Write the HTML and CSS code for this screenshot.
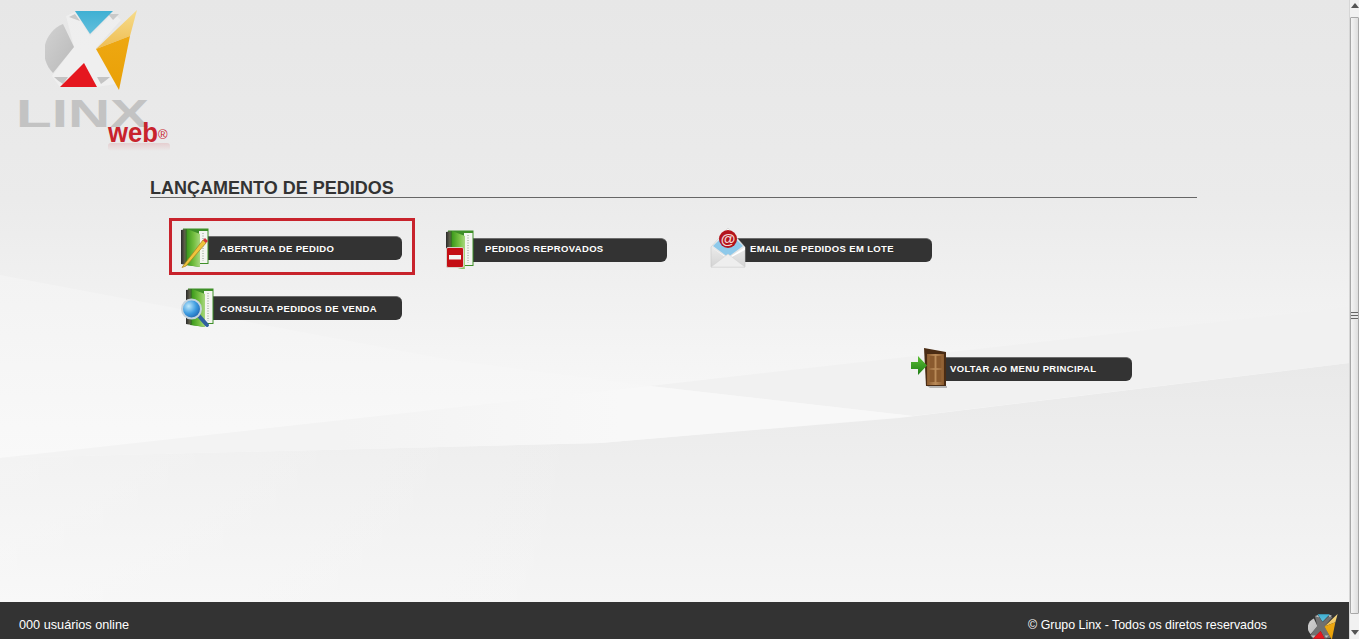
FILE: index.html
```html
<!DOCTYPE html>
<html lang="pt-BR">
<head>
<meta charset="utf-8">
<title>Lançamento de Pedidos</title>
<link rel="stylesheet" href="styles.css">
</head>
<body>
<svg class="defs" width="0" height="0" aria-hidden="true">
  <defs>
    <linearGradient id="gGray" x1="0" y1="0" x2="1" y2="1"><stop offset="0" stop-color="#d2d2d2"/><stop offset="1" stop-color="#b9b9b9"/></linearGradient>
    <linearGradient id="gBlue" x1="0" y1="0" x2="0" y2="1"><stop offset="0" stop-color="#3fb0d3"/><stop offset="1" stop-color="#62bfdc"/></linearGradient>
    <linearGradient id="gGoldT" x1="0" y1="0" x2="0" y2="1"><stop offset="0" stop-color="#f6dc8c"/><stop offset="1" stop-color="#efbd52"/></linearGradient>
    <linearGradient id="gGold" x1="0" y1="0" x2="0" y2="1"><stop offset="0" stop-color="#eea812"/><stop offset="1" stop-color="#e9a006"/></linearGradient>
    <linearGradient id="gCover" x1="0" y1="0" x2="1" y2="0"><stop offset="0" stop-color="#3c9a1c"/><stop offset=".55" stop-color="#76c042"/><stop offset="1" stop-color="#a7d77f"/></linearGradient>
    <linearGradient id="gSpine" x1="0" y1="0" x2="1" y2="0"><stop offset="0" stop-color="#2a2a2a"/><stop offset=".6" stop-color="#5d5d4a"/><stop offset="1" stop-color="#2f7a1c"/></linearGradient>
    <radialGradient id="gLens" cx=".35" cy=".35" r=".8"><stop offset="0" stop-color="#bfe9fb"/><stop offset=".5" stop-color="#3d9be0"/><stop offset="1" stop-color="#144f9e"/></radialGradient>
    <linearGradient id="gEnv" x1="0" y1="0" x2="0" y2="1"><stop offset="0" stop-color="#ffffff"/><stop offset="1" stop-color="#d4d4d4"/></linearGradient>
    <linearGradient id="gDoor" x1="0" y1="0" x2="1" y2="0"><stop offset="0" stop-color="#8a5a2e"/><stop offset=".5" stop-color="#b98a58"/><stop offset="1" stop-color="#8a5a2e"/></linearGradient>
    <linearGradient id="gArrow" x1="0" y1="0" x2="0" y2="1"><stop offset="0" stop-color="#5cc034"/><stop offset="1" stop-color="#1f7d16"/></linearGradient>
    <linearGradient id="gFade" x1="0" y1="0" x2="0" y2="1"><stop offset="0" stop-color="#c8232c" stop-opacity=".14"/><stop offset="1" stop-color="#c8232c" stop-opacity="0"/></linearGradient>
    <linearGradient id="bgTop" gradientUnits="userSpaceOnUse" x1="0" y1="275" x2="0" y2="458"><stop offset="0" stop-color="#f3f3f3"/><stop offset="1" stop-color="#f9f9f9"/></linearGradient>
    <linearGradient id="bgWedge" gradientUnits="userSpaceOnUse" x1="0" y1="0" x2="620" y2="0"><stop offset="0" stop-color="#f3f3f3"/><stop offset=".55" stop-color="#f3f3f3"/><stop offset="1" stop-color="#f8f8f8"/></linearGradient>
    <linearGradient id="bgLow" gradientUnits="userSpaceOnUse" x1="0" y1="363" x2="0" y2="602"><stop offset="0" stop-color="#e9e9e9"/><stop offset=".4" stop-color="#eeeeee"/><stop offset="1" stop-color="#f5f5f5"/></linearGradient>
    <linearGradient id="bgLeft" gradientUnits="userSpaceOnUse" x1="0" y1="0" x2="620" y2="0"><stop offset="0" stop-color="#ffffff" stop-opacity=".3"/><stop offset="1" stop-color="#ffffff" stop-opacity="0"/></linearGradient>
    <symbol id="mark" viewBox="45 10 93 81">
      <path d="M66 16 L75 12 L90 36 L113 13 L121 20 L96 48 L116 84 L97 87 L84 63 L60 87 L52 76 L74 47Z" fill="#ffffff" fill-opacity=".3"/>
      <path d="M63 24 L74 47 L53 73 A30 30 0 0 1 63 24Z" fill="url(#gGray)"/>
      <path d="M69 17 L75 14 L80 21Z M108 14 L119 14 L113 20Z" fill="#c9c9c9"/>
      <path d="M54 77 L68 77 L63 84 Q58 81 54 77Z M97 77 L110 77 Q104 82 101 84Z" fill="#c4c4c4"/>
      <path d="M75 11 L113 11 L90 34Z" fill="url(#gBlue)"/>
      <path d="M84 63 L97 87 L60 87Z" fill="#e5171f"/>
      <path d="M137 10 L96 49 L130 36Z" fill="url(#gGoldT)"/>
      <path d="M96 49 L130 36 L119 90Z" fill="url(#gGold)"/>
    </symbol>
    <symbol id="folder" viewBox="0 0 30 40">
      <path d="M3 0.5 H28.5 V36 H20 V39 L5 37Z" fill="#3e8f28"/>
      <rect x="19" y="3" width="8.5" height="32" fill="#f3f5f0"/>
      <path d="M23 5 V33" stroke="#8a9a8a" stroke-width="1" stroke-dasharray="1 1.5"/>
      <path d="M1 2 L7 1 V37 L1 36Z" fill="url(#gSpine)"/>
      <path d="M7 1 L20 6 V39 L7 37Z" fill="url(#gCover)"/>
    </symbol>
  </defs>
</svg>

<div class="page">
  <div class="content">
    <svg class="backdrop" viewBox="0 0 1349 639" preserveAspectRatio="none" aria-hidden="true">
      <path d="M0 275 L450 360 L650 386 L0 458Z" fill="url(#bgTop)"/>
      <path d="M0 458 L600 443 L899 418 L1349 363 V639 H0Z" fill="url(#bgLow)"/>
      <path d="M0 458 L600 443 L620 639 H0Z" fill="url(#bgLeft)"/>
      <path d="M650 386 L1349 307 V363 L913 416Z" fill="#f1f1f1"/>
      <path d="M0 458 L650 386 L913 416 L600 443Z" fill="url(#bgWedge)"/>
    </svg>

    <header class="brand">
      <svg class="logo" viewBox="0 0 180 160" role="img" aria-label="Linx web">
        <use href="#mark" x="45" y="10" width="93" height="81"/>
        <text class="logo-linx" x="16" y="127" textLength="133" lengthAdjust="spacingAndGlyphs">LINX</text>
        <text class="logo-web" x="108" y="142" textLength="50" lengthAdjust="spacingAndGlyphs">web</text>
        <text class="logo-reg" x="158" y="139">®</text>
        <rect class="logo-glow" x="108" y="143" width="62" height="8" rx="3"/>
      </svg>
    </header>

    <main class="panel">
      <h1 class="title">LANÇAMENTO DE PEDIDOS</h1>
      <nav class="menu">
        <a class="btn is-selected" href="#">
          <svg class="icon" viewBox="0 0 40 40" aria-hidden="true">
            <use href="#folder" x="0" y="0" width="30" height="40"/>
            <path d="M3 38 L2 39.5 L6 38 L26 15 L23 12Z" fill="#f0c43c" stroke="#a8801c" stroke-width=".7"/>
            <path d="M23 12 L26 15 L28 13 L25 10Z" fill="#d8343a"/>
          </svg>
          <span class="bar">ABERTURA DE PEDIDO</span>
        </a>
        <a class="btn is-lower" href="#">
          <svg class="icon" viewBox="0 0 40 40" aria-hidden="true">
            <use href="#folder" x="0" y="0" width="30" height="40"/>
            <rect x="1.5" y="17.5" width="17" height="20" rx="1.5" fill="#c40e14" stroke="#d8cfc8"/>
            <rect x="4" y="25" width="12" height="4.5" fill="#f4f4f4"/>
          </svg>
          <span class="bar">PEDIDOS REPROVADOS</span>
        </a>
        <a class="btn is-lower" href="#">
          <svg class="icon" viewBox="0 0 40 40" aria-hidden="true">
            <path d="M1 17 L18 -2 L35 17 V37 H1Z" fill="url(#gEnv)" stroke="#c8c8c8" stroke-width=".6"/>
            <path d="M3 16 L18 1 L33 16 L18 27Z" fill="#8ec9ea"/>
            <circle cx="18" cy="9" r="9" fill="#b3141c"/>
            <text class="icon-at" x="18" y="14" text-anchor="middle">@</text>
            <path d="M1 17 L18 28 L35 17 V20 L18 29Z" fill="#ffffff"/>
            <path d="M1 37 L18 24 L35 37Z" fill="#eeeeee" stroke="#d0d0d0" stroke-width=".5"/>
          </svg>
          <span class="bar">EMAIL DE PEDIDOS EM LOTE</span>
        </a>
        <a class="btn" href="#">
          <svg class="icon" viewBox="0 0 40 40" aria-hidden="true">
            <use href="#folder" x="5" y="0" width="30" height="40"/>
            <path d="M19 28 L27 37" stroke="#2f5f9e" stroke-width="4" stroke-linecap="round"/>
            <circle cx="11.5" cy="21" r="9.5" fill="url(#gLens)" stroke="#c4d2dd" stroke-width="2"/>
          </svg>
          <span class="bar">CONSULTA PEDIDOS DE VENDA</span>
        </a>
      </nav>
      <a class="btn is-back" href="#">
        <svg class="icon" viewBox="0 0 40 40" aria-hidden="true">
          <path d="M17 37 L37 37 L37 39 L20 39Z" fill="#b5b5b5"/>
          <path d="M14 -1 L36 3 L36 37 L16 37Z" fill="#4a2c14"/>
          <rect x="17" y="5" width="17" height="31" fill="url(#gDoor)"/>
          <rect x="19.5" y="7" width="5" height="12" fill="#8a5a2e"/>
          <rect x="26.5" y="7" width="5" height="12" fill="#8a5a2e"/>
          <rect x="19.5" y="21" width="5" height="12" fill="#8a5a2e"/>
          <rect x="26.5" y="21" width="5" height="12" fill="#8a5a2e"/>
          <path d="M1 13 H8 V7 L17 16.5 L8 26 V20 H1Z" fill="url(#gArrow)"/>
        </svg>
        <span class="bar is-tight">VOLTAR AO MENU PRINCIPAL</span>
      </a>
    </main>

    <footer class="footer">
      <span class="online">000 usuários online</span>
      <span class="copy">© Grupo Linx - Todos os diretos reservados</span>
      <svg class="footer-mark" viewBox="0 0 30 26" aria-hidden="true"><use href="#mark" width="30" height="26"/></svg>
    </footer>
  </div>

  <div class="scrollbar" aria-hidden="true">
    <span class="arrow arrow-up"></span>
    <span class="thumb"><span class="grip"></span></span>
    <span class="arrow arrow-down"></span>
  </div>
</div>
</body>
</html>
```
FILE: styles.css
```css
* { box-sizing: border-box; }
html, body { margin: 0; height: 100%; overflow: hidden; }
body { font-family: "Liberation Sans", Arial, sans-serif; color: #333; }
.defs { position: absolute; }

.page { display: flex; height: 639px; }
.content {
  position: relative;
  flex: 1;
  min-width: 0;
  display: flex;
  flex-direction: column;
  background: linear-gradient(180deg, #e7e7e7 0, #ebebeb 200px, #f1f1f1 300px, #f7f7f7 400px);
}
.backdrop { position: absolute; inset: 0; width: 100%; height: 100%; }

.brand { position: relative; height: 178px; }
.logo { display: block; width: 180px; height: 160px; }
.logo-linx { font: 700 38px "Liberation Sans", sans-serif; fill: #c3c3c3; }
.logo-web { font: 700 28px "Liberation Sans", sans-serif; fill: #c8232c; }
.logo-reg { font: 400 13px "Liberation Sans", sans-serif; fill: #c8232c; }
.logo-glow { fill: url(#gFade); }

.panel { position: relative; margin-left: 150px; width: 1047px; }
.title {
  margin: 0;
  height: 20px;
  font-size: 18px;
  line-height: 21px;
  font-weight: 700;
  color: #333;
  border-bottom: 1px solid #666;
}

.menu {
  display: grid;
  grid-template-columns: repeat(3, 265px);
  grid-auto-rows: 60px;
  margin: 30px 0 0 30px;
}

.btn {
  position: relative;
  display: block;
  width: 222px;
  height: 40px;
  padding: 8px 0 0 25px;
  text-decoration: none;
}
.bar {
  display: block;
  height: 24px;
  padding-left: 15px;
  font-size: 9.5px;
  letter-spacing: .35px;
  font-weight: 700;
  line-height: 23px;
  color: #fff;
  white-space: nowrap;
  background: #333;
  border-top: 1px solid #6d6d6d;
  border-radius: 0 6px 6px 0;
}
.icon { position: absolute; left: 0; top: 0; width: 40px; height: 40px; overflow: visible; z-index: 1; }
.icon-at { font: 700 15px "Liberation Sans", sans-serif; fill: #f2d5d5; }

.is-lower { margin-top: 2px; }
.is-lower .bar { line-height: 19px; }
.is-tight { line-height: 21px; }
.is-back { margin: 1px 0 0 760px; }
.is-selected::before {
  content: "";
  position: absolute;
  inset: -10px -13px -7px -11px;
  border: 3px solid #c8232c;
}

.footer {
  position: relative;
  margin-top: auto;
  height: 37px;
  display: flex;
  align-items: center;
  padding: 8px 11px 0 19px;
  overflow: hidden;
  background: #333;
  color: #fff;
}
.online { font-size: 12.7px; }
.copy { margin-left: auto; font-size: 12.4px; }
.footer-mark { flex: none; width: 30px; height: 26px; margin: 4px 0 0 41px; }

.scrollbar {
  width: 10px;
  flex: none;
  display: flex;
  flex-direction: column;
  align-items: center;
  background: #f1f1f1;
  border-left: 1px solid #d6d6d6;
}
.arrow { flex: none; width: 0; height: 0; border: 4px solid transparent; }
.arrow-up { margin: 3px 0 9px; border-top-width: 0; border-bottom: 5px solid #555; }
.arrow-down { margin: 16px 0 4px; border-bottom-width: 0; border-top: 5px solid #555; }
.thumb {
  flex: 1;
  width: 100%;
  display: flex;
  align-items: center;
  justify-content: center;
  background: linear-gradient(90deg, #f4f4f4, #dedede);
  border: 1px solid #a8a8a8;
  border-radius: 1px;
}
.grip {
  width: 8px;
  height: 8px;
  background: repeating-linear-gradient(180deg, #666 0, #666 1px, #e8e8e8 1px, #e8e8e8 3px);
}
```
